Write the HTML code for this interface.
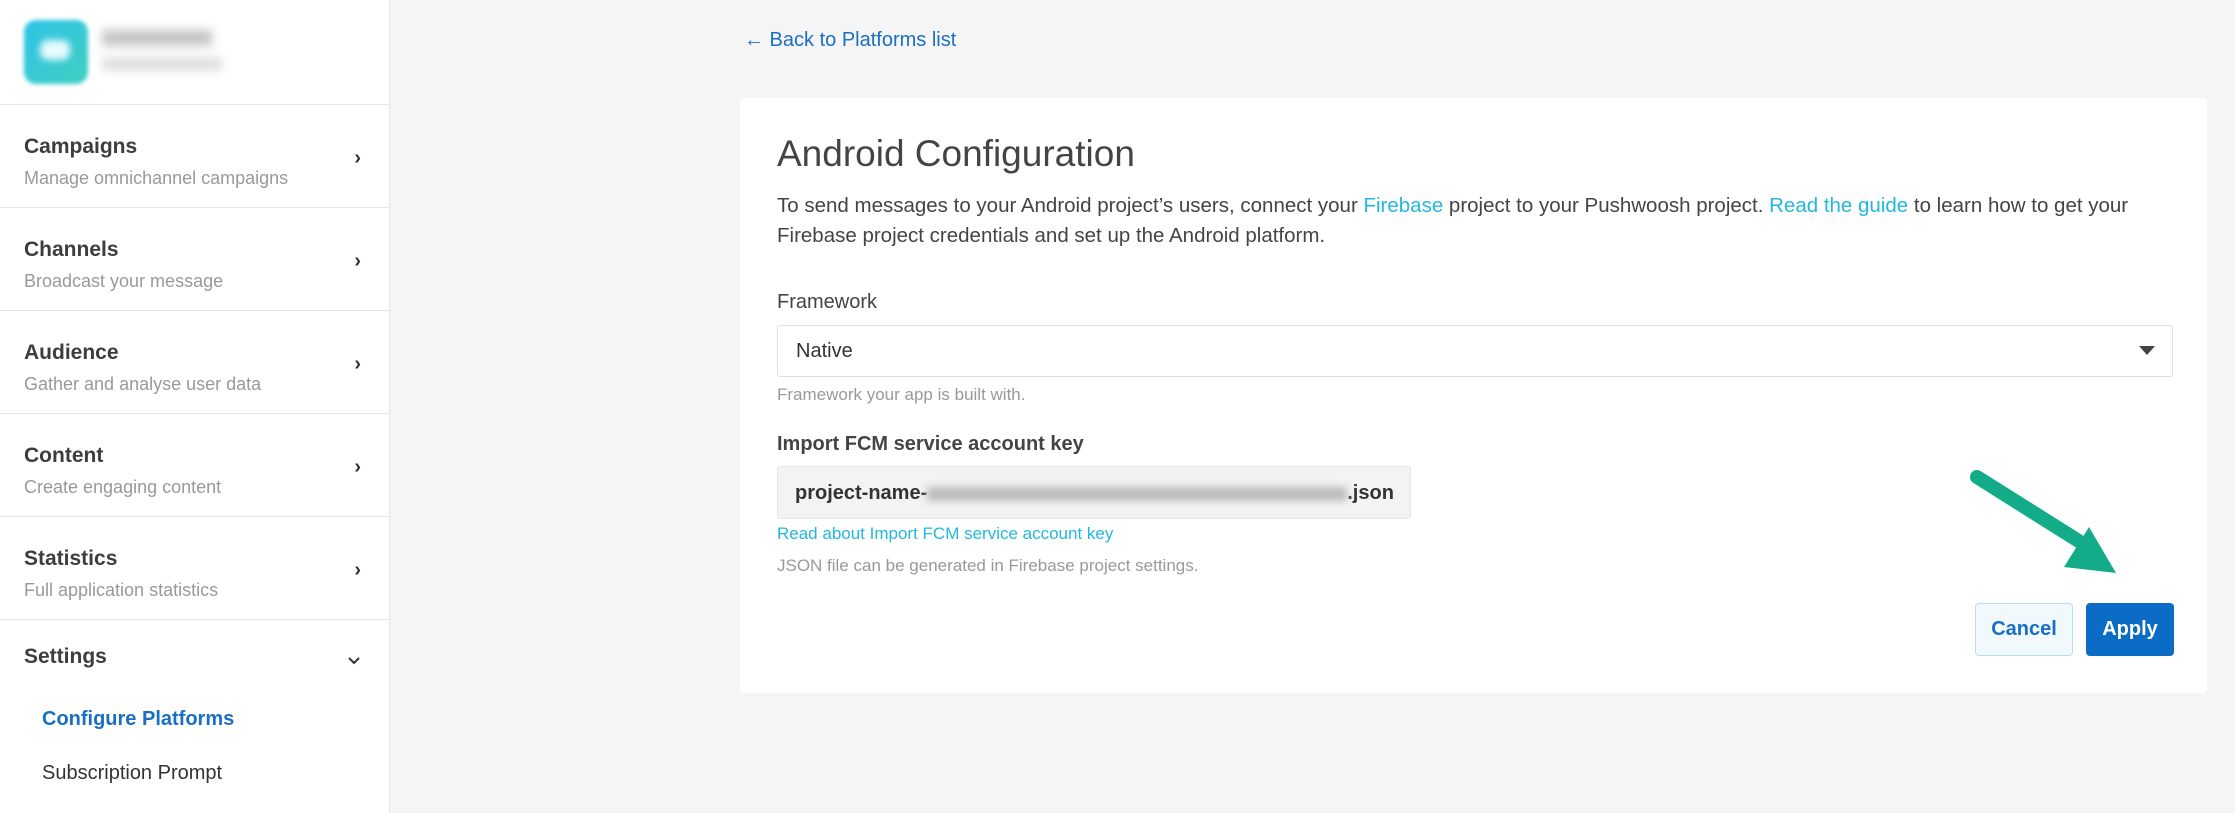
<!DOCTYPE html>
<html><head><style>
*{margin:0;padding:0;box-sizing:border-box}
body{width:2235px;height:813px;background:#f5f5f5;font-family:"Liberation Sans",sans-serif;position:relative;overflow:hidden;color:#444}
.sb{position:absolute;left:0;top:0;width:390px;height:813px;background:#fff;border-right:1px solid #e6e6e6}
.hd{height:105px;border-bottom:1px solid #e6e6e6;position:relative}
.logo{position:absolute;left:24px;top:20px;width:64px;height:64px;border-radius:12px;background:linear-gradient(135deg,#2fc2e8,#3fd0c0);filter:blur(2px)}
.logo:after{content:"";position:absolute;left:16px;top:20px;width:30px;height:20px;background:#e8fbff;border-radius:8px;filter:blur(3px)}
.bl1{position:absolute;left:102px;top:30px;width:110px;height:16px;background:#aaa;filter:blur(5px);opacity:.7}
.bl2{position:absolute;left:102px;top:58px;width:120px;height:12px;background:#ccc;filter:blur(5px);opacity:.7}
.it{height:103px;border-bottom:1px solid #e6e6e6;position:relative}
.it b{position:absolute;left:24px;top:30px;font-size:21px;font-weight:bold;color:#3d3d3d}
.it span{position:absolute;left:24px;top:63px;font-size:18px;color:#999}
.it i{position:absolute;right:28px;top:42px;font-style:normal;font-size:20px;color:#333;font-weight:bold}
.card{position:absolute;left:740px;top:98px;width:1467px;height:595px;background:#fff;border-radius:4px}
.a{color:#22b8e0}
</style></head><body>
<div class="sb">
<div class="hd"><div class="logo"></div><div class="bl1"></div><div class="bl2"></div></div>
<div class="it"><b>Campaigns</b><span>Manage omnichannel campaigns</span><i>›</i></div>
<div class="it"><b>Channels</b><span>Broadcast your message</span><i>›</i></div>
<div class="it"><b>Audience</b><span>Gather and analyse user data</span><i>›</i></div>
<div class="it"><b>Content</b><span>Create engaging content</span><i>›</i></div>
<div class="it"><b>Statistics</b><span>Full application statistics</span><i>›</i></div>
<div style="position:absolute;left:24px;top:645px;font-size:21px;font-weight:bold;color:#3d3d3d">Settings</div>
<svg style="position:absolute;left:347px;top:656px" width="14" height="10"><path d="M2 2l5 5 5-5" stroke="#333" stroke-width="2" fill="none"/></svg>
<div style="position:absolute;left:42px;top:708px;font-size:20px;font-weight:bold;color:#1a6fc4">Configure Platforms</div>
<div style="position:absolute;left:42px;top:762px;font-size:20px;color:#333">Subscription Prompt</div>
</div>
<div style="position:absolute;left:744px;top:29px;font-size:20px;color:#1a6fc4">← Back to Platforms list</div>
<div class="card"></div>
<div style="position:absolute;left:777px;top:133px;font-size:37px;color:#444">Android Configuration</div>
<div style="position:absolute;left:777px;top:191px;width:1410px;font-size:20.5px;line-height:30px;color:#444">To send messages to your Android project’s users, connect your <span class="a">Firebase</span> project to your Pushwoosh project. <span class="a">Read the guide</span> to learn how to get your Firebase project credentials and set up the Android platform.</div>
<div style="position:absolute;left:777px;top:291px;font-size:20px;color:#444">Framework</div>
<div style="position:absolute;left:777px;top:325px;width:1396px;height:52px;border:1px solid #e0e0e0;border-radius:3px;font-size:20px;padding:14px 18px;color:#333">Native</div>
<svg style="position:absolute;left:2139px;top:346px" width="16" height="10"><path d="M0 0h16L8 9z" fill="#444"/></svg>
<div style="position:absolute;left:777px;top:385px;font-size:17px;color:#999">Framework your app is built with.</div>
<div style="position:absolute;left:777px;top:433px;font-size:20px;font-weight:bold;color:#444">Import FCM service account key</div>
<div style="position:absolute;left:777px;top:466px;width:634px;height:53px;background:#f3f3f3;border:1px solid #e6e6e6;border-radius:3px;font-size:20px;padding:15px 17px;color:#333;font-weight:bold;white-space:nowrap;overflow:hidden">project-name-<span style="display:inline-block;width:420px;height:14px;background:#bbb;filter:blur(4px);vertical-align:middle"></span>.json</div>
<div style="position:absolute;left:777px;top:524px;font-size:17px;color:#22b8e0">Read about Import FCM service account key</div>
<div style="position:absolute;left:777px;top:556px;font-size:17px;color:#999">JSON file can be generated in Firebase project settings.</div>
<div style="position:absolute;left:1975px;top:603px;width:98px;height:53px;background:#f2f9fd;border:1px solid #b8dff0;border-radius:4px;font-size:20px;font-weight:bold;color:#1a6fc4;text-align:center;line-height:51px">Cancel</div>
<div style="position:absolute;left:2086px;top:603px;width:88px;height:53px;background:#0a6cc4;border-radius:4px;font-size:20px;font-weight:bold;color:#fff;text-align:center;line-height:53px">Apply</div>
<svg style="position:absolute;left:0;top:0" width="2235" height="813"><path d="M1977 477L2085 545" stroke="#12ad88" stroke-width="14" stroke-linecap="round"/><path d="M2089 527L2064 567L2116 573Z" fill="#12ad88"/></svg>
</body></html>
